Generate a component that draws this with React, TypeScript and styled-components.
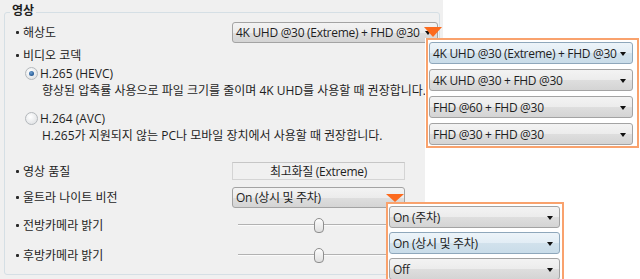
import React from 'react';
import styled, { createGlobalStyle } from 'styled-components';

const GlobalStyle = createGlobalStyle`
  html, body {
    margin: 0;
    padding: 0;
    background: #ffffff;
  }
  body {
    font-family: "Open Sans", "Noto Sans CJK KR", sans-serif;
    font-size: 12px;
    color: #1e1e1e;
  }
`;

const Page = styled.div`
  position: relative;
  width: 640px;
  height: 279px;
  overflow: hidden;
  background: #ffffff;
`;

const Panel = styled.div`
  width: 443px;
  height: 279px;
  box-sizing: border-box;
  padding: 12px 0 0 4px;
  background: #f0f0f0;
`;

const GroupBox = styled.div`
  width: 436px;
  height: 263px;
  box-sizing: border-box;
  border: 1px solid #d5dfe5;
  border-radius: 3px;
  display: flex;
  flex-direction: column;
`;

const Legend = styled.div`
  align-self: flex-start;
  margin: -10px 0 0 5px;
  padding: 0 2px;
  height: 16px;
  line-height: 16px;
  font-weight: bold;
  background: #f0f0f0;
`;

const Body = styled.div`
  display: flex;
  flex-direction: column;
  padding-left: 11px;
`;

const Row = styled.div<{ $h: number; $mt?: number; $indent?: number }>`
  display: flex;
  align-items: center;
  height: ${p => p.$h}px;
  margin-top: ${p => p.$mt ?? 0}px;
  padding-left: ${p => p.$indent ?? 0}px;
  white-space: nowrap;
`;

const Label = styled.div`
  width: 216px;
  display: flex;
  align-items: center;
  gap: 4px;
`;

const Bullet = styled.span`
  width: 3px;
  height: 3px;
  border-radius: 1px;
  background: #2a2a2a;
`;

const Radio = styled.span<{ $checked?: boolean }>`
  position: relative;
  width: 11px;
  height: 11px;
  margin-right: 2px;
  border-radius: 50%;
  border: 1px solid #b4b8bc;
  background: radial-gradient(circle at 40% 35%, #ffffff 0%, #e4e6e8 70%);
  &::after {
    content: '';
    display: ${p => (p.$checked ? 'block' : 'none')};
    position: absolute;
    left: 3px;
    top: 3px;
    width: 5px;
    height: 5px;
    border-radius: 50%;
    background: radial-gradient(circle at 40% 35%, #6d9fd0 0%, #1b4f8c 80%);
  }
`;

const Combo = styled.div<{ $w: number; $h?: number; $hot?: boolean }>`
  position: relative;
  width: ${p => p.$w}px;
  height: ${p => p.$h ?? 21}px;
  box-sizing: border-box;
  display: flex;
  align-items: center;
  padding-left: 3px;
  letter-spacing: -0.3px;
  border: 1px solid ${p => (p.$hot ? '#8ea7bb' : '#a3a3a3')};
  border-radius: 3px;
  background: ${p =>
    p.$hot
      ? 'linear-gradient(#edf4f9 0%, #e2edf5 50%, #d1e1ec 51%, #c9dce9 100%)'
      : 'linear-gradient(#f3f3f3 0%, #ececec 50%, #dedede 51%, #d4d4d4 100%)'};
  &::after {
    content: '';
    position: absolute;
    right: 6px;
    top: 50%;
    margin-top: -1px;
    border-left: 3px solid transparent;
    border-right: 3px solid transparent;
    border-top: 4px solid #111;
  }
`;

const Pointer = styled.span<{ $w: number; $h: number; $right: number; $top: number }>`
  position: absolute;
  z-index: 2;
  right: ${p => p.$right}px;
  top: ${p => p.$top}px;
  width: 0;
  height: 0;
  border-left: ${p => p.$w / 2}px solid transparent;
  border-right: ${p => p.$w / 2}px solid transparent;
  border-top: ${p => p.$h}px solid #fc6a1d;
`;

const ReadOnlyField = styled.div`
  width: 173px;
  height: 18px;
  box-sizing: border-box;
  border: 1px solid #d4d4d4;
  border-top-color: #c6c6c6;
  display: flex;
  align-items: center;
  justify-content: center;
  letter-spacing: -0.3px;
`;

const Slider = styled.div`
  position: relative;
  width: 173px;
  height: 22px;
  display: flex;
  align-items: center;
`;

const Track = styled.div`
  flex: 1;
  margin: 0 6px;
  height: 2px;
  box-sizing: border-box;
  border-top: 1px solid #b2b2b2;
  border-bottom: 1px solid #fbfbfb;
`;

const Thumb = styled.span`
  position: absolute;
  top: 4px;
  width: 10px;
  height: 15px;
  box-sizing: border-box;
  margin-left: -5px;
  border: 1px solid #8e8e8e;
  border-radius: 5px 5px 4px 4px;
  background: linear-gradient(#fdfdfd, #dedede);
`;

const Mat = styled.div`
  position: absolute;
  left: 425px;
  top: 38px;
  right: 0;
  bottom: 0;
  background: #ffffff;
`;

const Popup = styled.div<{ $left: number; $top: number; $w: number; $gap: number }>`
  position: absolute;
  z-index: 3;
  left: ${p => p.$left}px;
  top: ${p => p.$top}px;
  width: ${p => p.$w}px;
  box-sizing: border-box;
  padding: 2px 2px 1px 1px;
  border: 2px solid #f9a26d;
  background: #ffffff;
  display: flex;
  flex-direction: column;
  gap: ${p => p.$gap}px;
`;

const resolutions = [
  '4K UHD @30 (Extreme) + FHD @30',
  '4K UHD @30 + FHD @30',
  'FHD @60 + FHD @30',
  'FHD @30 + FHD @30',
];

const nightModes = ['On (주차)', 'On (상시 및 주차)', 'Off'];

const BrightnessSlider = ({ value }: { value: number }) => (
  <Slider>
    <Track />
    <Thumb style={{ left: `${6 + value * 161}px` }} />
  </Slider>
);

const SettingLabel = ({ children }: { children: React.ReactNode }) => (
  <Label>
    <Bullet />
    <span>{children}</span>
  </Label>
);

export default function App() {
  return (
    <Page>
      <GlobalStyle />
      <Panel>
        <GroupBox>
          <Legend>영상</Legend>
          <Body>
            <Row $h={22} $mt={2}>
              <SettingLabel>해상도</SettingLabel>
              <Combo $w={206}>
                4K UHD @30 (Extreme) + FHD @30
                <Pointer $w={19} $h={10} $right={-5} $top={4} />
              </Combo>
            </Row>
            <Row $h={22} $mt={1}>
              <SettingLabel>비디오 코덱</SettingLabel>
            </Row>
            <Row $h={14} $indent={9}>
              <Radio $checked />
              H.265 (HEVC)
            </Row>
            <Row $h={18} $mt={1} $indent={26}>
              향상된 압축률 사용으로 파일 크기를 줄이며 4K UHD를 사용할 때 권장합니다.
            </Row>
            <Row $h={18} $mt={10} $indent={9}>
              <Radio />
              H.264 (AVC)
            </Row>
            <Row $h={16} $indent={26}>
              H.265가 지원되지 않는 PC나 모바일 장치에서 사용할 때 권장합니다.
            </Row>
            <Row $h={22} $mt={17}>
              <SettingLabel>영상 품질</SettingLabel>
              <ReadOnlyField>최고화질 (Extreme)</ReadOnlyField>
            </Row>
            <Row $h={22} $mt={4}>
              <SettingLabel>울트라 나이트 비전</SettingLabel>
              <Combo $w={173}>
                On (상시 및 주차)
                <Pointer $w={18} $h={8} $right={0} $top={6} />
              </Combo>
            </Row>
            <Row $h={22} $mt={6}>
              <SettingLabel>전방카메라 밝기</SettingLabel>
              <BrightnessSlider value={0.5} />
            </Row>
            <Row $h={22} $mt={8}>
              <SettingLabel>후방카메라 밝기</SettingLabel>
              <BrightnessSlider value={0.5} />
            </Row>
          </Body>
        </GroupBox>
      </Panel>
      <Mat />
      <Popup $left={426} $top={38} $w={213} $gap={5}>
        {resolutions.map((r, i) => (
          <Combo key={r} $w={204} $h={22} $hot={i === 0}>
            {r}
          </Combo>
        ))}
      </Popup>
      <Popup $left={386} $top={202} $w={178} $gap={4}>
        {nightModes.map((m, i) => (
          <Combo key={m} $w={171} $h={22} $hot={i === 1}>
            {m}
          </Combo>
        ))}
      </Popup>
    </Page>
  );
}
